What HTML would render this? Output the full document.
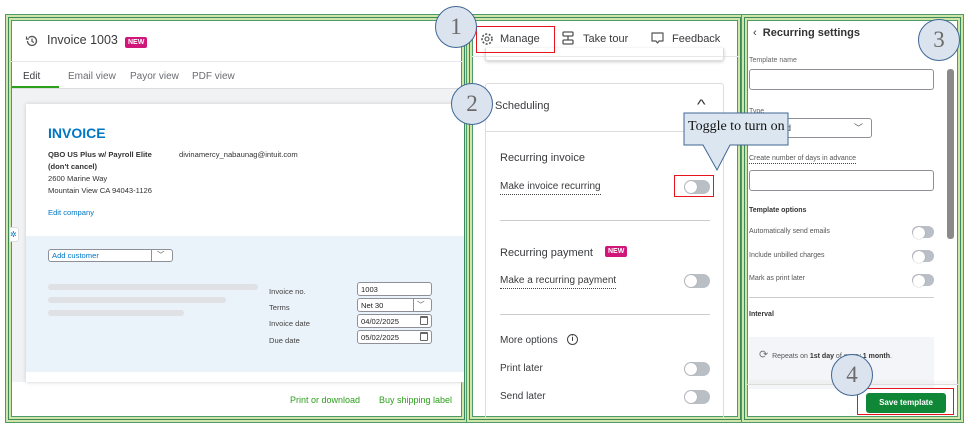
<!DOCTYPE html>
<html><head><meta charset="utf-8"><style>
*{box-sizing:border-box;margin:0;padding:0}
body{width:966px;height:427px;background:#fff;position:relative;overflow:hidden;font-family:"Liberation Sans",sans-serif;color:#393a3d}
.a{position:absolute}
.panel{position:absolute;border:1px solid #3c8a5c;box-shadow:0 0 0 2px #cfe6a8,0 0 0 3px #4f9a6a, inset 0 0 0 2px #cfe6a8, inset 0 0 0 3px #4f9a6a;background:#fff;overflow:hidden}
.circ{position:absolute;width:42px;height:42px;border-radius:50%;background:#dbe3ee;border:1.5px solid #3f6795;font-family:"Liberation Serif",serif;font-size:23px;color:#6b6b6b;text-align:center;line-height:39px;z-index:5}
.tog{position:absolute;width:26px;height:14px;border-radius:7px;background:#babec5}
.tog:after{content:"";position:absolute;left:1px;top:1px;width:12px;height:12px;border-radius:50%;background:#fff;box-shadow:0 0 1px #888}
.badge{position:absolute;background:#d1167a;color:#fff;font-size:7px;font-weight:bold;padding:2px 3px;border-radius:2px}
.inp{position:absolute;border:1px solid #8d9096;border-radius:3px;background:#fff}
.dot{border-bottom:1px dotted #444;padding-bottom:2px}
.cal{position:absolute;right:3px;top:1px;width:8px;height:9px;border:1px solid #666;border-top-width:2px;border-radius:1px}
</style></head><body>

<!-- Panel 1 -->
<div class="panel" style="left:8px;top:17px;width:457px;height:403px">
 <svg class="a" style="left:16px;top:16px" width="14" height="14" viewBox="0 0 14 14"><path d="M2.5 7a4.5 4.5 0 1 0 1.3-3.2" fill="none" stroke="#555" stroke-width="1.3"/><path d="M1.5 2.5v2.5h2.5" fill="none" stroke="#555" stroke-width="1.2"/><path d="M7 4.5v3l2 1" fill="none" stroke="#555" stroke-width="1.2"/></svg>
 <div class="a" style="left:38px;top:15px;font-size:12.5px;color:#393a3d">Invoice 1003</div>
 <div class="badge" style="left:116px;top:19px">NEW</div>
 <div class="a" style="left:2px;top:43px;width:452px;height:1px;background:#e6e7ea"></div>
 <div class="a" style="left:14px;top:53px;font-size:10px;color:#393a3d">Edit</div>
 <div class="a" style="left:59px;top:53px;font-size:10px;color:#6b6c72">Email view</div>
 <div class="a" style="left:121px;top:53px;font-size:10px;color:#6b6c72">Payor view</div>
 <div class="a" style="left:183px;top:53px;font-size:10px;color:#6b6c72">PDF view</div>
 <div class="a" style="left:3px;top:68px;width:47px;height:2px;background:#2ca01c"></div>
 <div class="a" style="left:3px;top:70px;width:451px;height:294px;background:#f1f2f4;border-top:1px solid #dcdde0"></div>
 <div class="a" style="left:17px;top:86px;width:440px;height:278px;background:#fff;box-shadow:0 0 4px #ccc"></div>
 <div class="a" style="left:39px;top:107px;font-size:14px;font-weight:bold;color:#0077c5">INVOICE</div>
 <div class="a" style="left:39px;top:131px;font-size:7.6px;font-weight:bold;line-height:12px;color:#333">QBO US Plus w/ Payroll Elite<br>(don't cancel)<br><span style="font-weight:normal">2600 Marine Way<br>Mountain View CA 94043-1126</span></div>
 <div class="a" style="left:170px;top:131px;font-size:7.6px;color:#333;line-height:12px">divinamercy_nabaunag@intuit.com</div>
 <div class="a" style="left:39px;top:190px;font-size:7.6px;color:#0077c5">Edit company</div>
 <div class="a" style="left:17px;top:218px;width:440px;height:136px;background:#eaf2fa"></div>
 <div class="inp" style="left:39px;top:231px;width:125px;height:13px;font-size:7.6px;color:#0077c5;padding:1px 3px">Add customer<span style="position:absolute;left:102px;top:0;width:1px;height:11px;background:#8d9096"></span><span style="position:absolute;left:108px;top:-1px;color:#555">﹀</span></div>
 <div class="a" style="left:39px;top:266px;width:210px;height:6px;border-radius:3px;background:#dfe1e5"></div>
 <div class="a" style="left:39px;top:279px;width:178px;height:6px;border-radius:3px;background:#dfe1e5"></div>
 <div class="a" style="left:39px;top:292px;width:136px;height:6px;border-radius:3px;background:#dfe1e5"></div>
 <div class="a" style="left:260px;top:266px;font-size:7.6px;line-height:16.2px;color:#444">Invoice no.<br>Terms<br>Invoice date<br>Due date</div>
 <div class="inp" style="left:348px;top:264px;width:75px;height:14px;font-size:7.6px;padding:2px 3px;color:#222">1003</div>
 <div class="inp" style="left:348px;top:280px;width:75px;height:14px;font-size:7.6px;padding:2px 3px;color:#222">Net 30<span style="position:absolute;left:55px;top:0;width:1px;height:12px;background:#8d9096"></span><span style="position:absolute;left:59px;top:0;color:#555">﹀</span></div>
 <div class="inp" style="left:348px;top:296px;width:75px;height:14px;font-size:7.6px;padding:2px 3px;color:#222">04/02/2025<span class="cal"></span></div>
 <div class="inp" style="left:348px;top:312px;width:75px;height:14px;font-size:7.6px;padding:2px 3px;color:#222">05/02/2025<span class="cal"></span></div>
 <div class="a" style="left:281px;top:377px;font-size:9px;color:#2ca01c">Print or download</div>
 <div class="a" style="left:370px;top:377px;font-size:9px;color:#2ca01c">Buy shipping label</div>
</div>
<div class="a" style="left:9px;top:227px;width:10px;height:15px;border:1px solid #ddd;border-radius:0 3px 3px 0;background:#fff;font-size:8px;color:#0077c5;line-height:13px">✲</div>

<!-- Panel 2 -->
<div class="panel" style="left:469px;top:17px;width:272px;height:403px">
 <div class="a" style="left:2px;top:38px;width:268px;height:1px;background:#e6e7ea"></div>
 <svg class="a" style="left:10px;top:14px" width="14" height="14" viewBox="0 0 14 14"><circle cx="7" cy="7" r="2" fill="none" stroke="#555" stroke-width="1.1"/><circle cx="7" cy="7" r="5" fill="none" stroke="#555" stroke-width="1.6" stroke-dasharray="2 1.6"/></svg>
 <div class="a" style="left:30px;top:15px;font-size:11px">Manage</div>
 <svg class="a" style="left:92px;top:13px" width="12" height="15" viewBox="0 0 12 15"><rect x="1" y="1" width="10" height="4" rx="1" fill="none" stroke="#555" stroke-width="1.3"/><rect x="1" y="9" width="10" height="4" rx="1" fill="none" stroke="#555" stroke-width="1.3"/><path d="M6 5v4" stroke="#555" stroke-width="1.3"/></svg>
 <div class="a" style="left:113px;top:15px;font-size:11px">Take tour</div>
 <svg class="a" style="left:180px;top:13px" width="15" height="15" viewBox="0 0 15 15"><path d="M2 2h11v8H9l-1.5 2L6 10H2z" fill="none" stroke="#555" stroke-width="1.2" stroke-linejoin="round"/><path d="M5 6h.1M7.5 6h.1M10 6h.1" stroke="#555" stroke-width="1.3"/></svg>
 <div class="a" style="left:202px;top:15px;font-size:11px">Feedback</div>
 <div class="a" style="left:15px;top:30px;width:239px;height:13px;border:1px solid #ddd;border-top:none;box-shadow:0 1px 3px #ccc;border-radius:0 0 3px 3px"></div>
 <div class="a" style="left:15px;top:65px;width:239px;height:345px;border:1px solid #ddd;border-radius:3px"></div>
 <div class="a" style="left:25px;top:82px;font-size:11px">Scheduling</div>
 <div class="a" style="left:228px;top:78px;font-size:14px;color:#333;transform:scaleX(1.3)">^</div>
 <div class="a" style="left:16px;top:113px;width:237px;height:1px;background:#ddd"></div>
 <div class="a" style="left:30px;top:134px;font-size:11px">Recurring invoice</div>
 <div class="a dot" style="left:30px;top:163px;font-size:10px">Make invoice recurring</div>
 <div class="tog" style="left:214px;top:162px"></div>
 <div class="a" style="left:30px;top:202px;width:210px;height:1px;background:#ccc"></div>
 <div class="a" style="left:30px;top:229px;font-size:11px">Recurring payment</div>
 <div class="badge" style="left:135px;top:228px">NEW</div>
 <div class="a dot" style="left:30px;top:257px;font-size:10px">Make a recurring payment</div>
 <div class="tog" style="left:214px;top:256px"></div>
 <div class="a" style="left:30px;top:296px;width:210px;height:1px;background:#ccc"></div>
 <div class="a" style="left:30px;top:317px;font-size:10px">More options</div>
 <div class="a" style="left:97px;top:316px;width:11px;height:11px;border:1.2px solid #444;border-radius:50%;font-size:7px;text-align:center;line-height:9px;font-weight:bold">i</div>
 <div class="a" style="left:30px;top:345px;font-size:10px">Print later</div>
 <div class="tog" style="left:214px;top:344px"></div>
 <div class="a" style="left:30px;top:373px;font-size:10px">Send later</div>
 <div class="tog" style="left:214px;top:372px"></div>
</div>
<div class="a" style="left:476px;top:26px;width:79px;height:27px;border:1.5px solid #e8141b"></div>
<div class="a" style="left:674px;top:175px;width:40px;height:22px;border:1.5px solid #e8141b"></div>

<!-- Panel 3 -->
<div class="panel" style="left:744px;top:17px;width:217px;height:403px">
 <div class="a" style="left:8px;top:9px;font-size:11px;color:#333">‹&nbsp; <b style="font-weight:bold;font-size:11px">Recurring settings</b></div>
 <div class="a" style="left:4px;top:39px;font-size:7px;color:#666">Template name</div>
 <div class="inp" style="left:4px;top:51px;width:185px;height:21px"></div>
 <div class="a" style="left:4px;top:90px;font-size:7px;color:#666">Type</div>
 <div class="inp" style="left:4px;top:100px;width:123px;height:20px;font-size:9px;padding:4px 80px 0 0;text-align:right">d<span style="position:absolute;right:8px;top:2px;color:#555">﹀</span></div>
 <div class="a dot" style="left:4px;top:137px;font-size:7px;color:#555;padding-bottom:1px">Create number of days in advance</div>
 <div class="inp" style="left:4px;top:152px;width:185px;height:21px"></div>
 <div class="a" style="left:4px;top:189px;font-size:7px;font-weight:bold;color:#333">Template options</div>
 <div class="a" style="left:4px;top:210px;font-size:7px;color:#555">Automatically send emails</div>
 <div class="tog" style="left:167px;top:208px;width:22px;height:12px"></div>
 <div class="a" style="left:4px;top:234px;font-size:7px;color:#555">Include unbilled charges</div>
 <div class="tog" style="left:167px;top:232px;width:22px;height:12px"></div>
 <div class="a" style="left:4px;top:257px;font-size:7px;color:#555">Mark as print later</div>
 <div class="tog" style="left:167px;top:256px;width:22px;height:12px"></div>
 <div class="a" style="left:4px;top:279px;width:185px;height:1px;background:#ccc"></div>
 <div class="a" style="left:4px;top:293px;font-size:7px;font-weight:bold;color:#333">Interval</div>
 <div class="a" style="left:4px;top:319px;width:185px;height:52px;background:#f4f5f8"></div>
 <div class="a" style="left:14px;top:330px;font-size:7px;color:#555"><span style="font-size:11px;color:#777">⟳</span>&nbsp; Repeats on <b style="color:#333">1st day</b> of every <b style="color:#333">1 month</b>.</div>
 <div class="a" style="left:202px;top:51px;width:7px;height:170px;background:#8a8a8a;border-radius:3px"></div>
 <div class="a" style="left:2px;top:366px;width:213px;height:1px;background:#ddd;box-shadow:0 -2px 3px #ddd"></div>
 <div class="a" style="left:121px;top:375px;width:80px;height:20px;background:#108737;border-radius:3px;color:#fff;font-size:8px;font-weight:bold;text-align:center;line-height:20px">Save template</div>
</div>
<div class="a" style="left:857px;top:388px;width:97px;height:27px;border:1.5px solid #e8141b"></div>

<!-- Tooltip -->
<svg class="a" style="left:683px;top:112px;z-index:6" width="108" height="62" viewBox="0 0 108 62"><path d="M1 1H105V33H47L34 58L20 33H1Z" fill="#dce6f0" stroke="#3f6795" stroke-width="1"/></svg>
<div class="a" style="left:688px;top:119px;font-family:'Liberation Serif',serif;font-size:14px;color:#111;z-index:7">Toggle to turn on</div>

<div class="circ" style="left:435px;top:6px">1</div>
<div class="circ" style="left:451px;top:83px">2</div>
<div class="circ" style="left:918px;top:19px">3</div>
<div class="circ" style="left:831px;top:354px">4</div>
</body></html>
